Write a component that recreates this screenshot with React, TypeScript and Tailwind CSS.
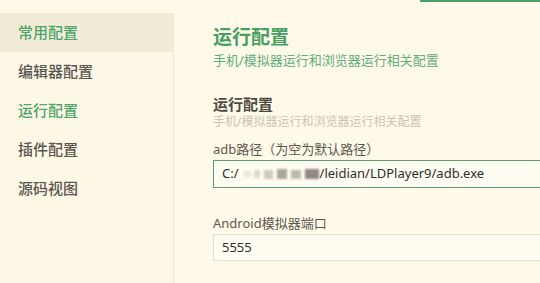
import React from 'react';

const menu = [
  { label: '常用配置', active: true, green: true },
  { label: '编辑器配置' },
  { label: '运行配置', green: true },
  { label: '插件配置' },
  { label: '源码视图' },
];

const App = () => {
  return (
    <div
      className="relative flex h-[283px] w-[540px] overflow-hidden bg-[#fef9e8]"
      style={{ fontFamily: "'Noto Sans', 'Noto Sans CJK SC', sans-serif" }}
    >
      {/* top accent */}
      <div className="absolute right-0 top-0 h-[2px] w-[120px] bg-[#4b9e68]" />

      {/* sidebar */}
      <div className="mt-[13px] w-[174px] shrink-0 border-r border-[#efe8d4] bg-[#fdf7e5]">
        {menu.map((m) => (
          <div
            key={m.label}
            className={`flex h-[39px] items-center pl-[18px] text-[15px] font-medium ${
              m.active ? 'bg-[#f2ebd6]' : ''
            } ${m.green ? 'text-[#4ea56b]' : 'text-[#5a5750]'}`}
          >
            {m.label}
          </div>
        ))}
      </div>

      {/* main */}
      <div className="flex-1 pl-[39px] pt-[24px]">
        <h1 className="text-[19px] font-bold leading-[26px] text-[#45a062]">运行配置</h1>
        <p className="mt-[1px] text-[13px] leading-[18px] text-[#5fae7b]">手机/模拟器运行和浏览器运行相关配置</p>

        <h2 className="mt-[25px] text-[15px] font-bold leading-[20px] text-[#4f4b44]">运行配置</h2>
        <p className="text-[12px] leading-[16px] text-[#cbc5b3]">手机/模拟器运行和浏览器运行相关配置</p>

        <div className="mt-[9px] text-[13px] leading-[20px] text-[#5c5850]">adb路径（为空为默认路径）</div>
        <div className="mt-[1px] flex h-[28px] w-[360px] items-center border border-[#5a9f72] bg-[#fffcf1] pl-[8px] text-[13px] text-[#2e2e2e]">
          <span>C:/</span>
          <span className="ml-[4px] mr-[1px] inline-flex w-[76px] items-center justify-between blur-[1px]">
            <span className="h-[6px] w-[8px] bg-[#ebe7db]" />
            <span className="h-[8px] w-[6px] bg-[#dcd8cb]" />
            <span className="h-[9px] w-[9px] bg-[#cfcabc]" />
            <span className="h-[10px] w-[10px] bg-[#aca69b]" />
            <span className="h-[9px] w-[10px] bg-[#bdb8ad]" />
            <span className="h-[10px] w-[14px] bg-[#8f8a84]" />
          </span>
          <span>/leidian/LDPlayer9/adb.exe</span>
        </div>

        <div className="mt-[25px] text-[13px] leading-[20px] text-[#5c5850]">Android模拟器端口</div>
        <div className="mt-[1px] flex h-[27px] w-[360px] items-center border border-[#e3dec9] bg-[#fffcf1] pl-[8px] text-[13px] text-[#2e2e2e]">
          5555
        </div>
      </div>
    </div>
  );
};

export default App;
